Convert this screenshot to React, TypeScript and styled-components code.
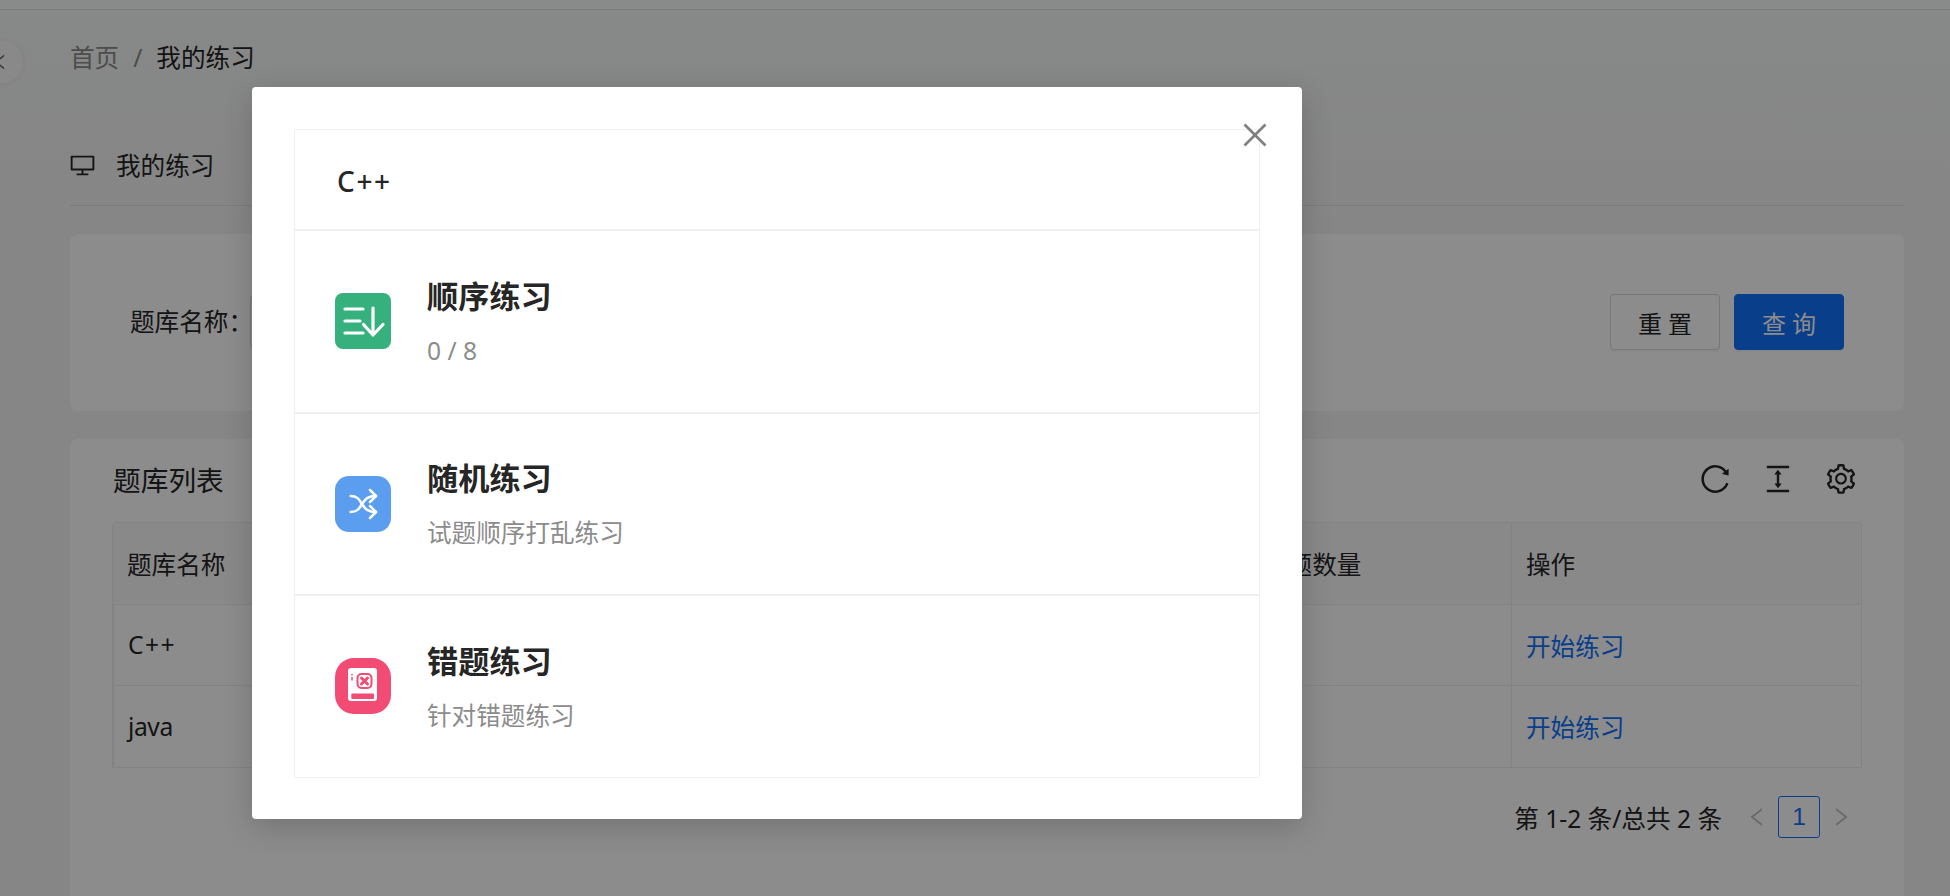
import React from "react";
import styled, { createGlobalStyle } from "styled-components";
import {
  AiOutlineClose,
  AiOutlineColumnHeight,
  AiOutlineDesktop,
  AiOutlineLeft,
  AiOutlineReload,
  AiOutlineRight,
  AiOutlineSetting,
} from "react-icons/ai";

const GlobalStyle = createGlobalStyle`
  html, body {
    margin: 0;
    padding: 0;
    height: 100%;
    overflow: hidden;
    background: #f5f5f5;
    font-family: "Noto Sans", "Noto Sans CJK SC", sans-serif;
    color: #262626;
  }
  * {
    box-sizing: border-box;
  }
`;

const Page = styled.div`
  position: relative;
  width: 1950px;
  height: 896px;
  overflow: hidden;
  background: linear-gradient(180deg, #f6f7f7, #f5f5f5 25%);
`;

const TopBar = styled.div`
  height: 10px;
  background: #fafbfb;
  border-bottom: 1px solid #dfe3e3;
`;

const Collapse = styled.div`
  position: absolute;
  left: -19px;
  top: 41px;
  width: 42px;
  height: 42px;
  border-radius: 50%;
  background: #fafafa;
  box-shadow: 0 1px 6px rgba(0, 0, 0, 0.06);
  display: flex;
  align-items: center;
  justify-content: flex-end;
  padding-right: 13px;
  font-size: 20px;
  color: #666;
`;

const Content = styled.div`
  padding: 0 46px 0 70px;
`;

const Breadcrumb = styled.div`
  height: 96px;
  padding-top: 30px;
  display: flex;
  align-items: flex-start;
  font-size: 24.6px;
  line-height: 36px;
`;

const Crumb = styled.span<{ $muted?: boolean }>`
  color: ${({ $muted }) => ($muted ? "#8c8c8c" : "#262626")};
`;

const CrumbSep = styled.span`
  color: #8c8c8c;
  margin: 0 14px;
`;

const Tabs = styled.div`
  height: 100px;
  padding-top: 42px;
  display: flex;
  align-items: flex-start;
  gap: 20px;
  border-bottom: 1px solid #dfe2e4;
  font-size: 24.6px;
  line-height: 36px;
  svg {
    font-size: 27px;
    margin: 4px 0 0 -1px;
  }
`;

const Card = styled.div`
  background: #fff;
  border-radius: 8px;
`;

const SearchCard = styled(Card)`
  margin-top: 28px;
  height: 177px;
  padding: 60px 60px 0 60px;
  display: flex;
  align-items: flex-start;
  justify-content: space-between;
`;

const Field = styled.div`
  display: flex;
  align-items: center;
  height: 56px;
  font-size: 24.6px;
`;

const FieldLabel = styled.label`
  width: 120px;
  flex: none;
  padding-bottom: 5px;
  white-space: nowrap;
`;

const FieldInput = styled.div`
  width: 400px;
  height: 54px;
  border: 1px solid #d9d9d9;
  border-radius: 4px;
`;

const Actions = styled.div`
  display: flex;
  gap: 14px;
`;

const Button = styled.button<{ $primary?: boolean }>`
  width: 110px;
  height: 56px;
  border-radius: 4px;
  font: inherit;
  font-size: 24px;
  letter-spacing: 6px;
  text-indent: 6px;
  padding: 0;
  color: ${({ $primary }) => ($primary ? "#fff" : "#262626")};
  background: ${({ $primary }) => ($primary ? "#1272fd" : "#fff")};
  border: 1px solid ${({ $primary }) => ($primary ? "#1272fd" : "#d9d9d9")};
  box-shadow: 0 2px 0 rgba(0, 0, 0, 0.03);
`;

const TableCard = styled(Card)`
  margin-top: 28px;
  height: 470px;
  padding: 0 42px;
`;

const TableHead = styled.div`
  height: 82.5px;
  padding-bottom: 2px;
  display: flex;
  align-items: center;
  justify-content: space-between;
`;

const TableTitle = styled.h2`
  margin: 0 0 0 1px;
  font-size: 27.7px;
  font-weight: 400;
`;

const Tools = styled.div`
  display: flex;
  align-items: center;
  gap: 29px;
  margin-right: 4px;
  font-size: 34px;
  color: #262626;
  svg {
    display: block;
  }
`;

const Grid = styled.div`
  display: grid;
  grid-template-columns: 1135px 263px 349px;
  border: 1px solid #eeeeee;
  border-bottom: 0;
  border-radius: 4px 4px 0 0;
  font-size: 24.6px;
`;

const Cell = styled.div<{ $head?: boolean }>`
  height: ${({ $head }) => ($head ? "82px" : "81.5px")};
  display: flex;
  align-items: center;
  padding: 0 14px;
  border-bottom: 1px solid #eeeeee;
  background: ${({ $head }) => ($head ? "#fafafa" : "#fff")};
  & + & {
    border-left: 1px solid #eeeeee;
  }
`;

const BankName = styled.span<{ $spacing: number }>`
  letter-spacing: ${({ $spacing }) => $spacing}px;
`;

const LinkText = styled.a`
  color: #1272fd;
`;

const Pagination = styled.div`
  margin-top: 28px;
  margin-right: 9px;
  height: 42px;
  display: flex;
  align-items: center;
  justify-content: flex-end;
  font-size: 24.6px;
`;

const PageText = styled.span`
  margin-right: 23px;
`;

const PageArrow = styled.span`
  display: flex;
  font-size: 24px;
  color: #bfbfbf;
`;

const PageBox = styled.span`
  width: 42px;
  height: 42px;
  margin: 0 9px;
  border: 1px solid #1272fd;
  border-radius: 3px;
  color: #1272fd;
  font-family: "Liberation Sans", sans-serif;
  display: flex;
  align-items: center;
  justify-content: center;
`;

const Overlay = styled.div`
  position: absolute;
  inset: 0;
  background: rgba(0, 0, 0, 0.45);
  padding: 87px 0 0 252px;
`;

const Modal = styled.div`
  position: relative;
  width: 1050px;
  height: 732px;
  padding: 42px;
  background: #fff;
  border-radius: 4px;
  box-shadow: 0 8px 30px rgba(0, 0, 0, 0.18);
`;

const Close = styled.div`
  position: absolute;
  right: 30px;
  top: 31px;
  display: flex;
  font-size: 34px;
  color: #808080;
`;

const Sheet = styled.div`
  border: 1px solid #f0f0f0;
  border-radius: 2px;
`;

const SheetTitle = styled.div`
  height: 99px;
  padding: 2px 0 0 42px;
  display: flex;
  align-items: center;
  font-size: 28px;
  font-weight: 500;
  letter-spacing: 1.6px;
  color: #262626;
`;

const Mode = styled.div`
  height: 182.5px;
  padding-left: 40px;
  display: flex;
  align-items: center;
  gap: 36px;
  border-top: 2px solid #f0f0f0;
`;

const ModeIcon = styled.div<{ $color: string; $radius: number }>`
  width: 56px;
  height: 56px;
  flex: none;
  border-radius: ${({ $radius }) => $radius}px;
  background: ${({ $color }) => $color};
  display: flex;
  align-items: center;
  justify-content: center;
`;

const ModeBody = styled.div`
  display: flex;
  flex-direction: column;
  gap: 17px;
`;

const ModeTitle = styled.div`
  font-size: 31.2px;
  line-height: 42px;
  font-weight: 700;
  color: #262626;
`;

const ModeDesc = styled.div`
  font-size: 24.6px;
  line-height: 34px;
  color: #8c8c8c;
`;

const SortIcon = () => (
  <svg width="56" height="56" viewBox="0 0 56 56" fill="none" stroke="#fff" strokeWidth="3.2" strokeLinecap="round" strokeLinejoin="round">
    <path d="M10 16h18M10 28h15M10 40h18" />
    <path d="M38 15v27M28.500 31.500L38 42l10-10.500" />
  </svg>
);

const ShuffleIcon = () => (
  <svg width="56" height="56" viewBox="0 0 56 56" fill="none" stroke="#fff" strokeWidth="2.5" strokeLinecap="round" strokeLinejoin="round">
    <path d="M15.700 20C22 20 24 23 27 28S33 36 41 36" />
    <path d="M15.700 36C22 36 24 33 27 28S33 20 41 20" />
    <path d="M35 14l6 6-6 6M35 30l6 6-6 6" />
  </svg>
);

const WrongBookIcon = () => (
  <svg width="56" height="56" viewBox="0 0 56 56">
    <rect x="13" y="10" width="29" height="33" rx="3" fill="#fff" />
    <rect x="16.300" y="35.500" width="22.700" height="5.500" rx="1" fill="#f24c74" />
    <rect x="22.500" y="16" width="14" height="14" rx="4" fill="none" stroke="#f24c74" strokeWidth="2" />
    <path d="M26.500 20l6 6M32.500 20l-6 6" stroke="#f24c74" strokeWidth="3" strokeLinecap="round" />
    <path d="M17 16v1.500M17 19v3.500" stroke="#f24c74" strokeWidth="1.500" />
  </svg>
);

const modes = [
  { title: "顺序练习", desc: "0 / 8", color: "#36b07d", radius: 8, icon: <SortIcon /> },
  { title: "随机练习", desc: "试题顺序打乱练习", color: "#5b9dee", radius: 14, icon: <ShuffleIcon /> },
  { title: "错题练习", desc: "针对错题练习", color: "#f24c74", radius: 19, icon: <WrongBookIcon /> },
];

const rows = [
  { name: "C++", spacing: 1.5 },
  { name: "java", spacing: -0.4 },
];

const App: React.FC = () => {
  return (
    <Page>
      <GlobalStyle />
      <TopBar />
      <Collapse>
        <AiOutlineLeft />
      </Collapse>
      <Content>
        <Breadcrumb>
          <Crumb $muted>首页</Crumb>
          <CrumbSep>/</CrumbSep>
          <Crumb>我的练习</Crumb>
        </Breadcrumb>
        <Tabs>
          <AiOutlineDesktop />
          <span>我的练习</span>
        </Tabs>
        <SearchCard>
          <Field>
            <FieldLabel>题库名称：</FieldLabel>
            <FieldInput />
          </Field>
          <Actions>
            <Button>重置</Button>
            <Button $primary>查询</Button>
          </Actions>
        </SearchCard>
        <TableCard>
          <TableHead>
            <TableTitle>题库列表</TableTitle>
            <Tools>
              <AiOutlineReload />
              <AiOutlineColumnHeight />
              <AiOutlineSetting />
            </Tools>
          </TableHead>
          <Grid>
            <Cell $head>题库名称</Cell>
            <Cell $head>试题数量</Cell>
            <Cell $head>操作</Cell>
            {rows.map((row) => (
              <React.Fragment key={row.name}>
                <Cell>
                  <BankName $spacing={row.spacing}>{row.name}</BankName>
                </Cell>
                <Cell>8</Cell>
                <Cell>
                  <LinkText>开始练习</LinkText>
                </Cell>
              </React.Fragment>
            ))}
          </Grid>
          <Pagination>
            <PageText>第 1-2 条/总共 2 条</PageText>
            <PageArrow>
              <AiOutlineLeft />
            </PageArrow>
            <PageBox>1</PageBox>
            <PageArrow>
              <AiOutlineRight />
            </PageArrow>
          </Pagination>
        </TableCard>
      </Content>
      <Overlay>
        <Modal>
          <Close>
            <AiOutlineClose />
          </Close>
          <Sheet>
            <SheetTitle>C++</SheetTitle>
            {modes.map((m) => (
              <Mode key={m.title}>
                <ModeIcon $color={m.color} $radius={m.radius}>
                  {m.icon}
                </ModeIcon>
                <ModeBody>
                  <ModeTitle>{m.title}</ModeTitle>
                  <ModeDesc>{m.desc}</ModeDesc>
                </ModeBody>
              </Mode>
            ))}
          </Sheet>
        </Modal>
      </Overlay>
    </Page>
  );
};

export default App;
